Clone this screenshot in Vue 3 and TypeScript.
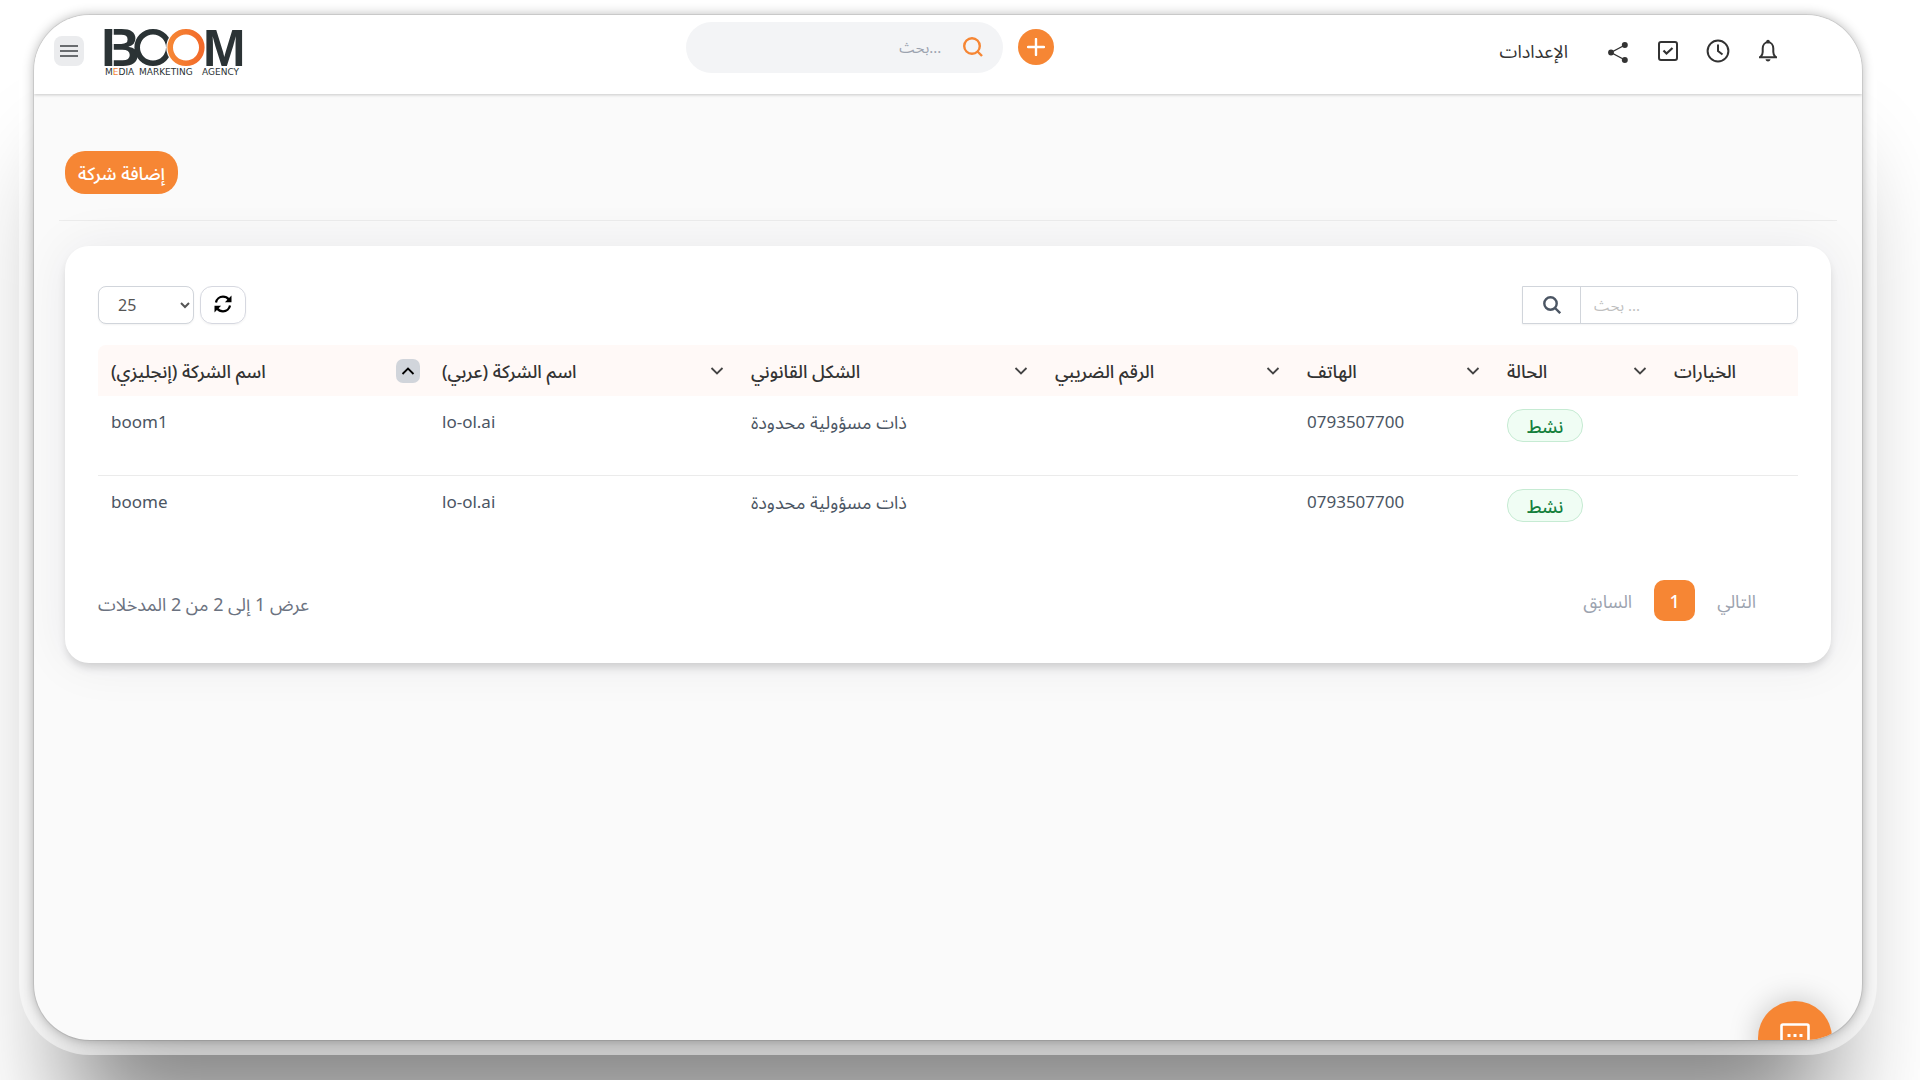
<script setup lang="ts">
import { ref } from 'vue'

interface Column {
  label: string
  width: number
  sort: 'asc' | 'desc' | null
}

interface Company {
  nameEn: string
  nameAr: string
  legalForm: string
  taxNumber: string
  phone: string
  status: string
}

const columns: Column[] = [
  { label: 'اسم الشركة (إنجليزي)', width: 331, sort: 'asc' },
  { label: 'اسم الشركة (عربي)', width: 309, sort: 'desc' },
  { label: 'الشكل القانوني', width: 304, sort: 'desc' },
  { label: 'الرقم الضريبي', width: 252, sort: 'desc' },
  { label: 'الهاتف', width: 200, sort: 'desc' },
  { label: 'الحالة', width: 167, sort: 'desc' },
  { label: 'الخيارات', width: 137, sort: null },
]
const totalWidth = columns.reduce((sum, c) => sum + c.width, 0)

const companies: Company[] = [
  { nameEn: 'boom1', nameAr: 'lo-ol.ai', legalForm: 'ذات مسؤولية محدودة', taxNumber: '', phone: '0793507700', status: 'نشط' },
  { nameEn: 'boome', nameAr: 'lo-ol.ai', legalForm: 'ذات مسؤولية محدودة', taxNumber: '', phone: '0793507700', status: 'نشط' },
]

const pageSize = ref('25')
const globalQuery = ref('')
const tableQuery = ref('')
</script>

<template>
  <div class="page">
    <div class="window">
      <header class="topbar">
        <div class="brand">
          <button class="menu-btn" type="button" aria-label="القائمة">
            <svg width="18" height="14" viewBox="0 0 18 14" fill="none" stroke="#3f4245" stroke-width="1.3">
              <path d="M0 2h18M0 7h18M0 12h18" />
            </svg>
          </button>
          <svg class="logo" width="136" height="47" viewBox="0 0 136 47" role="img" aria-label="BOOM Media Marketing Agency">
            <defs>
              <linearGradient id="ring" x1="0" x2="1" y1="0" y2="0">
                <stop offset="0" stop-color="#f68634" />
                <stop offset="1" stop-color="#f26a2a" />
              </linearGradient>
            </defs>
            <text class="logo-letter" x="-4" y="37">B</text>
            <path d="M8 0v38" stroke="#fff" stroke-width="1.5" />
            <circle cx="48" cy="18.500" r="15.800" fill="none" stroke="#2b3335" stroke-width="5.600" />
            <circle cx="81" cy="18.500" r="19.800" fill="#fff" />
            <circle cx="81" cy="18.500" r="15.800" fill="#fff" stroke="url(#ring)" stroke-width="5.600" />
            <text class="logo-letter logo-letter-end" x="98" y="37">M</text>
            <text class="logo-tag" x="0" y="46">M<tspan fill="#f68634">E</tspan>DIA</text>
            <text class="logo-tag" x="34" y="46">MARKETING</text>
            <text class="logo-tag" x="97" y="46">AGENCY</text>
          </svg>
        </div>

        <div class="quick">
          <label class="global-search">
            <input v-model="globalQuery" type="text" placeholder="بحث..." aria-label="بحث" />
            <svg width="20" height="20" viewBox="0 0 20 20" fill="none" stroke="#f68634" stroke-width="2.400">
              <circle cx="9" cy="9" r="7.800" />
              <path d="M14 14l5 5" />
            </svg>
          </label>
          <button class="add-btn" type="button" aria-label="إضافة">
            <svg width="18" height="18" viewBox="0 0 18 18" fill="none" stroke="#fff" stroke-width="2.400" stroke-linecap="round">
              <path d="M9 1v16M1 9h16" />
            </svg>
          </button>
        </div>

        <nav class="tools">
          <a class="settings" href="#">الإعدادات</a>
          <button class="tool" type="button" aria-label="مشاركة">
            <svg width="24" height="24" viewBox="0 0 24 24" fill="#333" stroke="#333">
              <path d="M19 6L5 13.500L19 21" fill="none" stroke-width="1.400" />
              <circle cx="5" cy="13.500" r="2.900" stroke="none" />
              <circle cx="18.800" cy="6" r="3" stroke="none" />
              <circle cx="18.800" cy="21" r="3" stroke="none" />
            </svg>
          </button>
          <button class="tool" type="button" aria-label="المهام">
            <svg width="24" height="24" viewBox="0 0 24 24" fill="none" stroke="#333" stroke-width="2">
              <rect x="3" y="3" width="18" height="18" rx="2" />
              <path d="M7.500 11.500l3 3L16.500 9" stroke-width="2.200" />
            </svg>
          </button>
          <button class="tool" type="button" aria-label="السجل">
            <svg width="24" height="24" viewBox="0 0 24 24" fill="none" stroke="#333" stroke-width="2">
              <circle cx="12" cy="12" r="10.400" />
              <path d="M12 5.500V12l4.500 3.500" />
            </svg>
          </button>
          <button class="tool" type="button" aria-label="الإشعارات">
            <svg width="24" height="24" viewBox="0 0 24 24" fill="none" stroke="#333" stroke-width="2">
              <path d="M3 18.200h18M4.500 18c1.700-1.500 2.200-3 2.200-5V9.500c0-3.500 2.200-6.200 5.300-6.200s5.300 2.700 5.300 6.200V13c0 2 .5 3.500 2.200 5" />
              <circle cx="12" cy="2.600" r="1.800" fill="#333" stroke="none" />
              <path d="M9.500 20.200h5c-.3 1.500-1.300 2.200-2.500 2.200s-2.200-.7-2.500-2.200z" fill="#333" stroke="none" />
            </svg>
          </button>
        </nav>
      </header>

      <main class="content">
        <div class="actions">
          <button class="primary" type="button">إضافة شركة</button>
        </div>

        <section class="card">
          <div class="card-tools">
            <div class="left-tools">
              <select v-model="pageSize" class="page-size" aria-label="عدد الصفوف">
                <option value="25">25</option>
                <option value="50">50</option>
                <option value="100">100</option>
              </select>
              <button class="refresh" type="button" aria-label="تحديث">
                <svg width="18" height="18" viewBox="0 0 18 18" fill="none" stroke="#000" stroke-width="2.200">
                  <path d="M2 7.500C2.600 4 5.500 1.700 9 1.700c2.400 0 4.400 1 5.800 2.800" />
                  <path d="M16 10.500c-.6 3.500-3.500 5.800-7 5.800-2.400 0-4.400-1-5.800-2.800" />
                  <path d="M17.500 .6v6.600h-6.600z M.5 17.400v-6.600h6.600z" fill="#000" stroke="none" />
                </svg>
              </button>
            </div>
            <label class="table-search">
              <span class="table-search-icon">
                <svg width="18" height="18" viewBox="0 0 18 18" fill="none" stroke="#4b5563" stroke-width="2.400">
                  <circle cx="7.500" cy="7.500" r="6.200" />
                  <path d="M12 12l5.200 5.200" />
                </svg>
              </span>
              <input v-model="tableQuery" type="text" placeholder="بحث ..." aria-label="بحث في الجدول" />
            </label>
          </div>

          <table class="grid">
            <colgroup>
              <col v-for="c in columns" :key="c.label" :style="{ width: (c.width / totalWidth) * 100 + '%' }" />
            </colgroup>
            <thead>
              <tr>
                <th v-for="c in columns" :key="c.label" scope="col">
                  <div class="head-cell">
                    <span>{{ c.label }}</span>
                    <button v-if="c.sort" class="sort" :class="{ active: c.sort === 'asc' }" type="button" aria-label="ترتيب">
                      <svg width="14" height="10" viewBox="0 0 14 10" fill="none" stroke-width="1.800">
                        <path :d="c.sort === 'asc' ? 'M1.500 8L7 2.500L12.500 8' : 'M1.500 2L7 7.500L12.500 2'" />
                      </svg>
                    </button>
                  </div>
                </th>
              </tr>
            </thead>
            <tbody>
              <tr v-for="row in companies" :key="row.nameEn">
                <td>{{ row.nameEn }}</td>
                <td>{{ row.nameAr }}</td>
                <td class="arabic">{{ row.legalForm }}</td>
                <td>{{ row.taxNumber }}</td>
                <td>{{ row.phone }}</td>
                <td class="status"><span class="badge">{{ row.status }}</span></td>
                <td></td>
              </tr>
            </tbody>
          </table>

          <footer class="card-foot">
            <span class="info">عرض 1 إلى 2 من 2 المدخلات</span>
            <nav class="pager">
              <button class="page-link" type="button">السابق</button>
              <button class="page-link current" type="button">1</button>
              <button class="page-link" type="button">التالي</button>
            </nav>
          </footer>
        </section>
      </main>

      <button class="chat" type="button" aria-label="محادثة">
        <svg width="30" height="30" viewBox="0 0 30 30" fill="none" stroke="#fff" stroke-width="2.600">
          <path d="M1.500 28V3q0-1.500 1.500-1.500h24q1.500 0 1.500 1.500v20q0 1.500-1.500 1.500H6z" />
          <path d="M7.500 12.500h3M13.500 12.500h3M19.500 12.500h3" stroke-width="3" />
        </svg>
      </button>
    </div>
  </div>
</template>

<style>
body {
  margin: 0;
  background: #fff;
}
</style>

<style scoped>
* {
  box-sizing: border-box;
}

.page {
  display: flex;
  min-height: 100vh;
  padding: 15px 58px 40px 34px;
  overflow: hidden;
  font-family: "Noto Sans", "Noto Sans Arabic", "DejaVu Sans", sans-serif;
  font-size: 17px;
  line-height: 24px;
  color: #4b5563;
}

button,
input,
select {
  font: inherit;
  color: inherit;
}

button {
  display: flex;
  align-items: center;
  justify-content: center;
  padding: 0;
  border: 0;
  background: none;
}

svg {
  display: block;
  flex: none;
}

.window {
  position: relative;
  display: flex;
  flex: 1;
  flex-direction: column;
  min-width: 0;
  border-radius: 56px;
  background: #fafafa;
  box-shadow:
    0 0 0 1px rgba(0, 0, 0, 0.08),
    0 0 12px rgba(0, 0, 0, 0.3),
    0 0 0 15px rgba(255, 255, 255, 0.5),
    0 120px 110px -36px rgba(0, 0, 0, 0.48);
  overflow: hidden;
}

.topbar {
  display: flex;
  justify-content: space-between;
  height: 79px;
  padding: 0 82px 0 20px;
  background: #fff;
  box-shadow: 0 1px 3px rgba(0, 0, 0, 0.2);
}

.brand {
  display: flex;
  align-items: flex-start;
  gap: 21px;
  padding-top: 14px;
}

.menu-btn {
  width: 30px;
  height: 30px;
  margin-top: 7px;
  border-radius: 8px;
  background: #ebecee;
}

.logo {
  overflow: visible;
}

.logo-letter {
  font-family: "Liberation Sans", sans-serif;
  font-size: 54px;
  font-weight: 700;
  fill: #2b3335;
}

.logo-letter-end {
  font-size: 51px;
}

.logo-tag {
  font-family: "DejaVu Sans", sans-serif;
  font-size: 9px;
  fill: #2b3335;
}

.quick {
  display: flex;
  align-items: center;
  gap: 15px;
  height: 64px;
}

.global-search {
  display: flex;
  align-items: center;
  gap: 22px;
  width: 317px;
  height: 51px;
  padding: 0 20px;
  border-radius: 26px;
  background: #f3f4f6;
}

.global-search input {
  flex: 1;
  min-width: 0;
  padding: 0;
  border: 0;
  outline: 0;
  background: none;
  font-size: 15px;
  text-align: right;
}

.global-search input::placeholder {
  color: #9ca3af;
}

.add-btn {
  width: 36px;
  height: 36px;
  border-radius: 50%;
  background: #f68634;
}

.tools {
  display: flex;
  align-items: center;
  gap: 26px;
  height: 72px;
}

.settings {
  margin-right: 12px;
  color: #333;
  font-size: 18px;
  text-decoration: none;
}

.content {
  padding: 57px 31px;
}

.actions {
  display: flex;
  margin: 0 -6px 25px;
  padding: 0 6px 26px;
  border-bottom: 1px solid #ececec;
}

.primary {
  height: 43px;
  padding: 0 13px;
  border-radius: 20px;
  background: #f68634;
  color: #fff;
  font-size: 18px;
  font-weight: 500;
}

.card {
  padding: 40px 33px 42px;
  border-radius: 24px;
  background: #fff;
  box-shadow:
    0 6px 10px -2px rgba(0, 0, 0, 0.16),
    0 0 50px rgba(30, 30, 60, 0.07);
}

.card-tools {
  display: flex;
  justify-content: space-between;
  margin-bottom: 21px;
}

.left-tools {
  display: flex;
  gap: 6px;
}

.page-size {
  width: 96px;
  height: 38px;
  padding: 0 0 0 15px;
  border: 1px solid #d1d5db;
  border-radius: 8px;
  background: #fff;
  box-shadow: 0 1px 2px rgba(0, 0, 0, 0.05);
  color: #555;
  font-size: 16px;
}

.refresh {
  width: 46px;
  height: 38px;
  padding-bottom: 3px;
  border: 1px solid #d6d8e0;
  border-radius: 12px;
  box-shadow: 0 1px 2px rgba(0, 0, 0, 0.05);
}

.table-search {
  display: flex;
  width: 276px;
  height: 38px;
  border: 1px solid #d1d5db;
  border-radius: 0 8px 8px 0;
  box-shadow: 0 1px 2px rgba(0, 0, 0, 0.05);
}

.table-search-icon {
  display: flex;
  align-items: center;
  justify-content: center;
  width: 58px;
  border-right: 1px solid #d1d5db;
}

.table-search input {
  flex: 1;
  min-width: 0;
  padding: 0 13px;
  border: 0;
  outline: 0;
  background: none;
  font-size: 15px;
}

.table-search input::placeholder {
  color: #bfbfbf;
}

.grid {
  width: 100%;
  table-layout: fixed;
  border-collapse: separate;
  border-spacing: 0;
}

th {
  height: 51px;
  padding: 0 9px 0 13px;
  background: #fff9f7;
  color: #333;
  font-size: 18px;
  font-weight: 500;
  text-align: left;
}

th:first-child {
  border-top-left-radius: 8px;
}

th:last-child {
  border-top-right-radius: 8px;
}

.head-cell {
  display: flex;
  align-items: center;
  justify-content: space-between;
  white-space: nowrap;
}

.sort {
  width: 24px;
  height: 24px;
  border-radius: 7px;
  stroke: #444;
}

.sort.active {
  background: #d1d5db;
  stroke: #000;
}

td {
  height: 80px;
  padding: 14px 13px 0;
  vertical-align: top;
}

td.arabic {
  font-size: 18px;
}

td.status {
  padding-top: 13px;
}

tbody tr:not(:last-child) td {
  border-bottom: 1px solid #ebebeb;
}

.badge {
  display: inline-flex;
  align-items: center;
  height: 33px;
  padding: 0 19px;
  border: 1px solid #c6ebd3;
  border-radius: 16px;
  background: #f0fdf4;
  color: #15803d;
  font-size: 18px;
  font-weight: 500;
}

.card-foot {
  display: flex;
  align-items: center;
  justify-content: space-between;
  margin-top: 24px;
}

.info {
  padding-top: 6px;
  color: #6b7280;
  font-size: 18px;
}

.pager {
  display: flex;
  gap: 2px;
  padding-right: 22px;
}

.page-link {
  height: 41px;
  padding: 0 20px;
  border-radius: 10px;
  color: #9ca3af;
  font-size: 18px;
}

.page-link.current {
  width: 41px;
  padding: 0;
  background: #f68634;
  color: #fff;
  font-weight: 500;
}

.chat {
  position: absolute;
  right: 30px;
  bottom: -35px;
  width: 74px;
  height: 74px;
  border-radius: 50%;
  background: #f68634;
  box-shadow: 0 0 30px rgba(0, 0, 0, 0.22);
}
</style>
